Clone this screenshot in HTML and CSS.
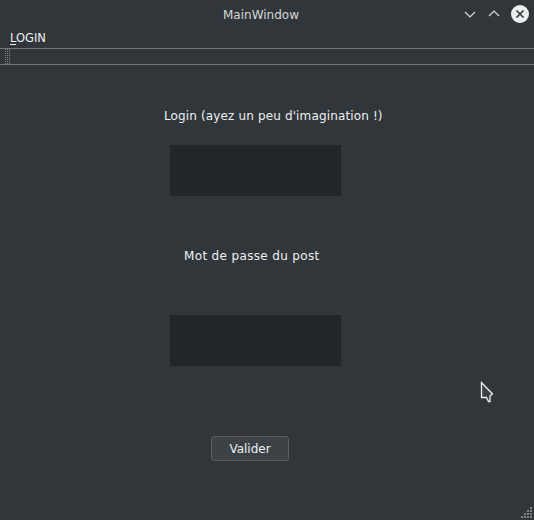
FILE: index.html
```html
<!DOCTYPE html>
<html>
<head>
<meta charset="utf-8">
<link rel="stylesheet" href="styles.css">
</head>
<body>
<div class="window">
  <div class="titlebar">
    <div class="title">MainWindow</div>
    <div class="controls">
      <svg class="ctl" width="14" height="14" viewBox="0 0 14 14"><path d="M2 5 L7 10 L12 5" fill="none" stroke="#d8dadc" stroke-width="1.2"/></svg>
      <svg class="ctl" width="14" height="14" viewBox="0 0 14 14"><path d="M2 9 L7 4 L12 9" fill="none" stroke="#d8dadc" stroke-width="1.2"/></svg>
      <svg class="ctl close" width="18" height="18" viewBox="0 0 18 18"><circle cx="9" cy="9" r="9" fill="#eceded"/><path d="M5.5 5.5 L12.5 12.5 M12.5 5.5 L5.5 12.5" stroke="#31363b" stroke-width="1.6"/></svg>
    </div>
  </div>
  <div class="menubar"><span class="menu"><u>L</u>OGIN</span></div>
  <div class="toolbar">
    <svg class="handle" width="5" height="15" viewBox="0 0 5 15">
      <defs><pattern id="hd" width="2" height="2" patternUnits="userSpaceOnUse"><rect width="1" height="1" fill="#80858a"/></pattern></defs>
      <rect width="5" height="15" fill="url(#hd)"/>
    </svg>
  </div>
  <div class="content">
    <div class="label l1">Login (ayez un peu d'imagination !)</div>
    <div class="field f1"></div>
    <div class="label l2">Mot de passe du post</div>
    <div class="field f2"></div>
    <button class="btn">Valider</button>
  </div>
  <svg class="cursor" width="14" height="22" viewBox="0 0 14 22"><path d="M1.5 1.5 L1.5 16.5 L6.5 16.5 L8.5 20.5 L10 20.5 L10 15 L12.5 13 Z" fill="#3d4045" stroke="#f0f0f0" stroke-width="1.3" stroke-linejoin="miter"/></svg>
  <svg class="grip" width="12" height="12" viewBox="0 0 12 12">
    <rect x="9" y="0" width="2" height="2" fill="#7d8287"/>
    <rect x="6" y="3" width="2" height="2" fill="#7d8287"/>
    <rect x="9" y="3" width="2" height="2" fill="#7d8287"/>
    <rect x="3" y="6" width="2" height="2" fill="#7d8287"/>
    <rect x="6" y="6" width="2" height="2" fill="#7d8287"/>
    <rect x="9" y="6" width="2" height="2" fill="#7d8287"/>
    <rect x="0" y="9" width="2" height="2" fill="#7d8287"/>
    <rect x="3" y="9" width="2" height="2" fill="#7d8287"/>
    <rect x="6" y="9" width="2" height="2" fill="#7d8287"/>
    <rect x="9" y="9" width="2" height="2" fill="#7d8287"/>
  </svg>
</div>
</body>
</html>
```
FILE: styles.css
```css
html, body {
  margin: 0;
  padding: 0;
  background: #31363b;
}
.window {
  position: relative;
  width: 534px;
  height: 520px;
  background: #31363b;
  font-family: "DejaVu Sans", "Noto Sans", sans-serif;
  color: #eff0f1;
  overflow: hidden;
}
.titlebar {
  height: 28px;
  background: #31363b;
  display: flex;
  align-items: center;
  position: relative;
}
.title {
  flex: 1;
  text-align: center;
  font-size: 12px;
  color: #d4d6d8;
  padding-right: 12px;
  margin-top: 1px;
}
.controls {
  position: absolute;
  right: 5px;
  top: 5px;
  display: flex;
  align-items: center;
  gap: 10px;
}
.ctl { display: block; }
.menubar {
  height: 19px;
  display: flex;
  align-items: center;
  padding-left: 10px;
  font-size: 11.5px;
}
.menu u { text-decoration-thickness: 1px; text-underline-offset: 2px; }
.toolbar {
  height: 15px;
  border-top: 1px solid #71767a;
  border-bottom: 1px solid #71767a;
  margin-top: 1px;
}
.handle {
  display: block;
  margin-left: 5px;
}
.content {
  display: flex;
  flex-direction: column;
  align-items: flex-start;
}
.label {
  font-size: 12px;
  line-height: 16px;
  color: #eff0f1;
}
.l1 { margin-top: 43px; margin-left: 164px; letter-spacing: 0.14px; }
.field {
  width: 171px;
  height: 51px;
  background: #232629;
  margin-left: 170px;
}
.f1 { margin-top: 21px; }
.l2 { margin-top: 52px; margin-left: 184px; letter-spacing: 0.35px; }
.f2 { margin-top: 51px; }
.btn {
  margin-top: 70px;
  margin-left: 211px;
  width: 78px;
  height: 25px;
  background: #3d4247;
  border: 1px solid #5a5e63;
  border-radius: 3px;
  color: #eff0f1;
  font-family: "DejaVu Sans", "Noto Sans", sans-serif;
  font-size: 12px;
  padding: 0;
}
.cursor {
  position: absolute;
  left: 480px;
  top: 381px;
}
.grip {
  position: absolute;
  right: 1px;
  bottom: 1px;
}
```
